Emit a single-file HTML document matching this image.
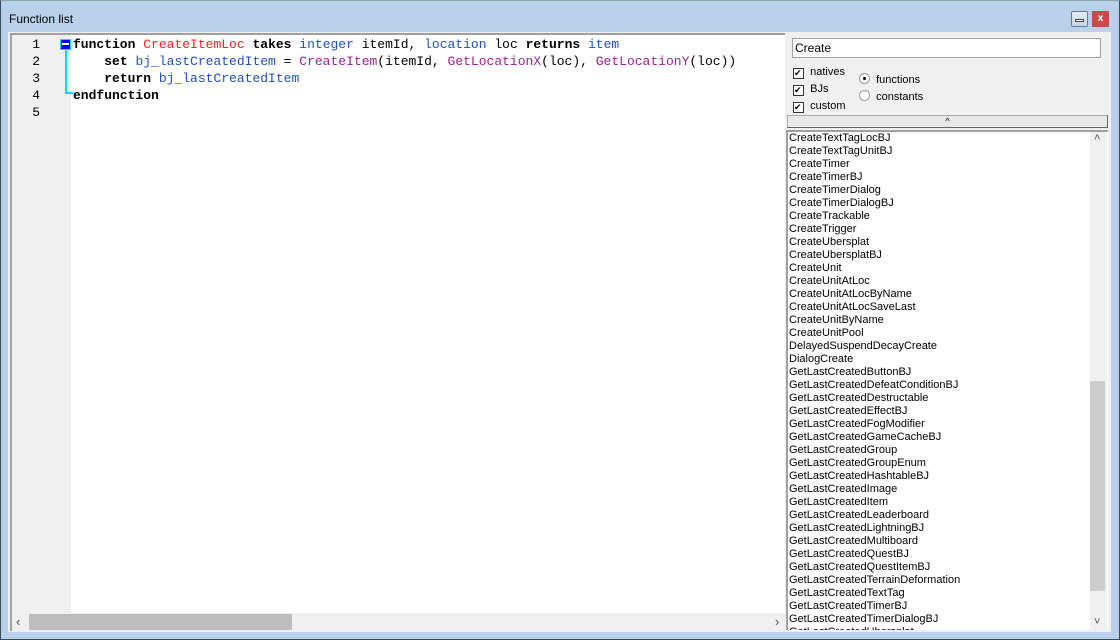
<!DOCTYPE html>
<html><head><meta charset="utf-8"><style>
*{margin:0;padding:0;box-sizing:border-box}
body{width:1120px;height:640px;overflow:hidden;background:#fff;position:relative;font-family:"Liberation Sans",Tahoma,sans-serif}
.frame{position:absolute;left:0;top:0;width:1120px;height:640px;background:#b9d1ea;border:1px solid #3a4a5a;border-top-color:#8aa;}
.title{position:absolute;left:9px;top:12px;font-size:12px;color:#000}
.client{position:absolute;left:8px;top:32px;width:1103px;height:600px;background:#f0f0f0}
.ed{position:absolute;left:10px;top:33px;width:775px;height:598px;background:#fff;border-left:2px solid #a0a0a0;border-top:2px solid #a0a0a0}
.gut{position:absolute;left:0;top:0;width:59px;height:578px;background:#f0f0f0}
.code{position:absolute;left:61px;top:1px;font-family:"Liberation Mono",monospace;font-size:13px;line-height:17px;white-space:pre;color:#000}
.ln{position:absolute;left:0;top:1px;width:28px;text-align:right;font-family:"Liberation Mono",monospace;font-size:13px;line-height:17px;color:#000;white-space:pre}
.k{font-weight:bold}.r{color:#ff2020}.b{color:#2050c0}.p{color:#a02090}
.hs{position:absolute;left:0;top:578px;width:773px;height:18px;background:#f0f0f0}
.list{position:absolute;left:786px;top:130px;width:322px;height:500px;background:#fff;border-left:2px solid #a0a0a0;border-top:2px solid #a0a0a0;overflow:hidden}
.items{position:absolute;left:1px;top:0px;font-size:11px;line-height:13px;color:#000;white-space:pre}
.vs{position:absolute;left:302px;top:0;width:17px;height:498px;background:#f0f0f0}
</style></head><body>
<div class="frame"></div>
<div class="title">Function list</div>
<div style="position:absolute;left:1071px;top:11px;width:17px;height:16px;border:1px solid #6a7d92;border-radius:2px;background:linear-gradient(#e6eef7,#c3d4e8)"><div style="position:absolute;left:3px;top:7px;width:9px;height:3px;border:1px solid #444;background:#fff"></div></div>
<div style="position:absolute;left:1092px;top:11px;width:17px;height:16px;background:#c74b4b;color:#fff;font-size:10px;font-weight:bold;text-align:center;line-height:15px">x</div>
<div class="client"></div>
<div class="ed">
<div class="gut"></div>
<div class="ln">1
2
3
4
5</div>
<div style="position:absolute;left:48px;top:4px;width:11px;height:11px;background:#0000e0;border:1px solid #00e0ff"><div style="position:absolute;left:1px;top:3px;width:7px;height:2px;background:#fff"></div></div>
<div style="position:absolute;left:53px;top:15px;width:2px;height:44px;background:#00d8ff"></div>
<div style="position:absolute;left:53px;top:57px;width:8px;height:2px;background:#00d8ff"></div>
<div class="code"><span class="k">function</span> <span class="r">CreateItemLoc</span> <span class="k">takes</span> <span class="b">integer</span> itemId, <span class="b">location</span> loc <span class="k">returns</span> <span class="b">item</span>
    <span class="k">set</span> <span class="b">bj_lastCreatedItem</span> = <span class="p">CreateItem</span>(itemId, <span class="p">GetLocationX</span>(loc), <span class="p">GetLocationY</span>(loc))
    <span class="k">return</span> <span class="b">bj_lastCreatedItem</span>
<span class="k">endfunction</span></div>
<div class="hs"><span style="position:absolute;left:4px;top:1px;font-size:13px;color:#555">&#8249;</span><div style="position:absolute;left:17px;top:1px;width:263px;height:16px;background:#bdbdbd"></div><span style="position:absolute;left:763px;top:1px;font-size:13px;color:#555">&#8250;</span></div>
</div>
<div style="position:absolute;left:792px;top:38px;width:309px;height:20px;background:#fff;border:1px solid #a0a0a0;font-size:12px;line-height:18px;padding-left:2px">Create</div>
<div style="position:absolute;left:793px;top:64px;font-size:11px;line-height:17px">
<div><span style="display:inline-block;width:11px;height:11px;border:1px solid #333;background:#fff;font-size:9px;line-height:9px;vertical-align:-1px">&#10004;</span> &nbsp;natives</div>
<div><span style="display:inline-block;width:11px;height:11px;border:1px solid #333;background:#fff;font-size:9px;line-height:9px;vertical-align:-1px">&#10004;</span> &nbsp;BJs</div>
<div><span style="display:inline-block;width:11px;height:11px;border:1px solid #333;background:#fff;font-size:9px;line-height:9px;vertical-align:-1px">&#10004;</span> &nbsp;custom</div>
</div>
<div style="position:absolute;left:859px;top:72px;font-size:11px;line-height:17px">
<div><span style="display:inline-block;width:11px;height:11px;border:1px solid #999;border-radius:50%;background:#fff;vertical-align:-1px;position:relative"><span style="position:absolute;left:3px;top:3px;width:3px;height:3px;background:#000;border-radius:50%"></span></span> &nbsp;functions</div>
<div><span style="display:inline-block;width:11px;height:11px;border:1px solid #999;border-radius:50%;background:#fff;vertical-align:-1px"></span> &nbsp;constants</div>
</div>
<div style="position:absolute;left:787px;top:115px;width:321px;height:13px;background:#e8e8e8;border:1px solid #aaa;border-right-color:#666;border-bottom-color:#666;text-align:center;font-size:9px;line-height:11px">^</div>
<div class="list"><div class="items">CreateTextTagLocBJ
CreateTextTagUnitBJ
CreateTimer
CreateTimerBJ
CreateTimerDialog
CreateTimerDialogBJ
CreateTrackable
CreateTrigger
CreateUbersplat
CreateUbersplatBJ
CreateUnit
CreateUnitAtLoc
CreateUnitAtLocByName
CreateUnitAtLocSaveLast
CreateUnitByName
CreateUnitPool
DelayedSuspendDecayCreate
DialogCreate
GetLastCreatedButtonBJ
GetLastCreatedDefeatConditionBJ
GetLastCreatedDestructable
GetLastCreatedEffectBJ
GetLastCreatedFogModifier
GetLastCreatedGameCacheBJ
GetLastCreatedGroup
GetLastCreatedGroupEnum
GetLastCreatedHashtableBJ
GetLastCreatedImage
GetLastCreatedItem
GetLastCreatedLeaderboard
GetLastCreatedLightningBJ
GetLastCreatedMultiboard
GetLastCreatedQuestBJ
GetLastCreatedQuestItemBJ
GetLastCreatedTerrainDeformation
GetLastCreatedTextTag
GetLastCreatedTimerBJ
GetLastCreatedTimerDialogBJ
GetLastCreatedUbersplat</div>
<div class="vs"><span style="position:absolute;left:4px;top:0;font-size:11px;color:#555">&#708;</span><div style="position:absolute;left:0;top:249px;width:15px;height:210px;background:#cdcdcd"></div><span style="position:absolute;left:4px;top:484px;font-size:11px;color:#555">&#709;</span></div>
</div>
</body></html>
